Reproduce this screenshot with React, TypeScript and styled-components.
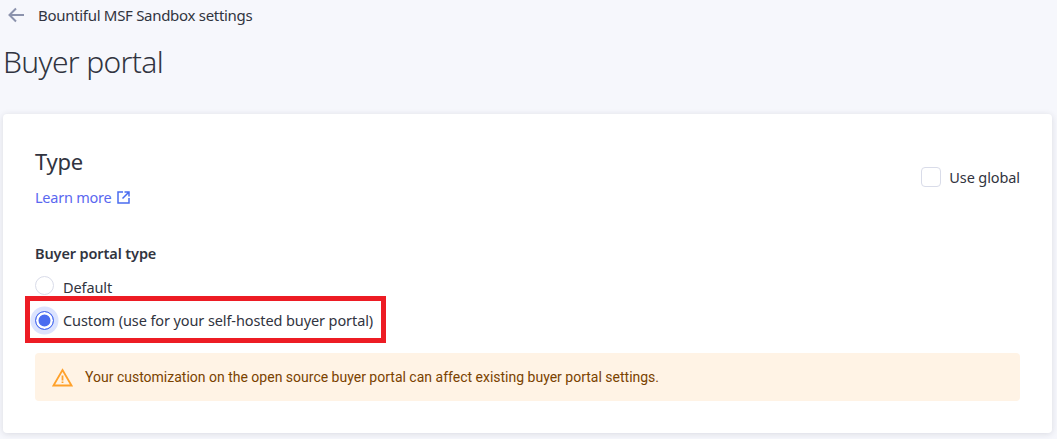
import React from "react";
import styled, { createGlobalStyle } from "styled-components";

const Global = createGlobalStyle`
  html, body { margin: 0; padding: 0; background: #f6f7fc; }
  body { font-family: "Noto Sans", "Open Sans", sans-serif; color: #313440; }
`;

const Page = styled.div`
  width: 1057px;
  height: 439px;
  overflow: hidden;
  box-sizing: border-box;
  padding: 0 5px 0 3px;
`;

const TopBar = styled.div`
  display: flex;
  align-items: center;
  height: 30px;
  padding-left: 4px;
  gap: 13px;
`;

const BackLink = styled.span`
  display: flex;
  width: 18px;
  margin-top: -1px;
  color: #8c93ad;
`;

const Crumb = styled.span`
  font-size: 15px;
  letter-spacing: -0.3px;
  line-height: 30px;
`;

const Title = styled.h1`
  margin: 12px 0 0 0;
  height: 72px;
  font-family: "Noto Sans", sans-serif;
  font-weight: 300;
  font-size: 30px;
  line-height: 40px;
  letter-spacing: -0.65px;
  color: #313440;
`;

const Card = styled.section`
  height: 319px;
  box-sizing: border-box;
  background: #fff;
  border-radius: 4px;
  box-shadow: 0 1px 6px rgba(49, 52, 64, 0.14);
  padding: 28px 32px 0 32px;
`;

const CardHead = styled.div`
  display: flex;
  justify-content: space-between;
  align-items: center;
  height: 70px;
`;

const Heading = styled.h2`
  margin: 0;
  font-weight: 400;
  font-size: 22px;
  line-height: 30px;
  letter-spacing: -0.3px;
`;

const Learn = styled.a`
  display: flex;
  align-items: center;
  gap: 5px;
  margin-top: 10px;
  color: #5a68f0;
  font-size: 14.5px;
  line-height: 22px;
  letter-spacing: -0.25px;
`;

const UseGlobal = styled.label`
  display: flex;
  align-items: center;
  gap: 8px;
  font-size: 14.5px;
  letter-spacing: -0.1px;
`;

const Check = styled.span`
  width: 18px;
  height: 18px;
  border: 1px solid #d9dce9;
  border-radius: 4px;
  background: #fff;
`;

const FieldLabel = styled.div`
  margin-top: 30px;
  font-size: 14.5px;
  line-height: 22px;
  font-weight: 600;
  letter-spacing: -0.12px;
`;

const RadioList = styled.div`
  margin-top: 5px;
`;

const RadioRow = styled.label<{ $lowered?: boolean }>`
  position: relative;
  display: flex;
  align-items: center;
  gap: 9px;
  height: 34px;
  box-sizing: border-box;
  padding-top: ${(p) => (p.$lowered ? "2px" : "0")};
  font-size: 14.5px;
  letter-spacing: -0.1px;
  color: #313440;
`;

const Radio = styled.span<{ $on?: boolean }>`
  box-sizing: border-box;
  width: 19px;
  height: 19px;
  flex: none;
  border-radius: 50%;
  background: ${(p) => (p.$on ? "#4a6cf0" : "#fff")};
  border: 1px solid ${(p) => (p.$on ? "#4a6cf0" : "#d9dce9")};
  box-shadow: ${(p) => (p.$on ? "inset 0 0 0 2.5px #fff, 0 0 0 4.5px #dbe3fe" : "none")};
  position: relative;
  top: ${(p) => (p.$on ? "0" : "-2px")};
`;

const Highlight = styled.span`
  position: absolute;
  left: -10px;
  top: -7px;
  width: 361px;
  height: 47px;
  box-sizing: border-box;
  border: 5px solid #ed1c24;
  pointer-events: none;
`;

const Alert = styled.div`
  display: flex;
  align-items: center;
  gap: 12px;
  height: 48px;
  margin-top: 16px;
  padding-left: 17px;
  box-sizing: border-box;
  background: #fff3e5;
  border-radius: 4px;
  color: #7a4200;
  font-family: Roboto, sans-serif;
  font-size: 14px;
`;

export default function App() {
  return (
    <>
      <Global />
      <Page>
        <TopBar>
          <BackLink>
            <svg width="18" height="18" viewBox="0 0 18 18" fill="none" stroke="currentColor" strokeWidth="2">
              <path d="M17 9H2.5M9 2.5 2.5 9 9 15.5" />
            </svg>
          </BackLink>
          <Crumb>Bountiful MSF Sandbox settings</Crumb>
        </TopBar>
        <Title>Buyer portal</Title>
        <Card>
          <CardHead>
            <div>
              <Heading>Type</Heading>
              <Learn>
                Learn more
                <svg width="15" height="15" viewBox="0 0 15 15" fill="none" stroke="#4a6cf0" strokeWidth="1.5">
                  <path d="M7 2H2v11h11V8M8.5 2H13v4.5M13 2 6.5 8.5" />
                </svg>
              </Learn>
            </div>
            <UseGlobal>
              <Check />
              Use global
            </UseGlobal>
          </CardHead>
          <FieldLabel>Buyer portal type</FieldLabel>
          <RadioList>
            <RadioRow $lowered>
              <Radio />
              Default
            </RadioRow>
            <RadioRow>
              <Radio $on />
              Custom (use for your self-hosted buyer portal)
              <Highlight />
            </RadioRow>
          </RadioList>
          <Alert>
            <svg width="21" height="19" viewBox="0 0 21 19" fill="none">
              <path d="M10.5 2 19.5 17.5H1.5Z" stroke="#ffa12b" strokeWidth="1.8" strokeLinejoin="miter" />
              <path d="M10.5 7.5v5M10.5 13.5v1.6" stroke="#ffa12b" strokeWidth="1.8" />
            </svg>
            Your customization on the open source buyer portal can affect existing buyer portal settings.
          </Alert>
        </Card>
      </Page>
    </>
  );
}
